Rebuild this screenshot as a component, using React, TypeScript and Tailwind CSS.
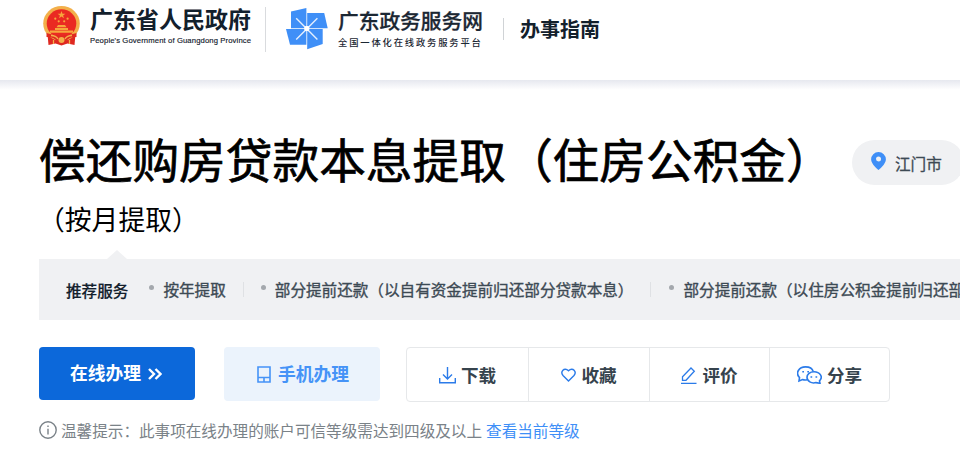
// Service guide page: site header, item title, recommended services and actions
import React from "react";

const services = [
  { label: "按年提取", cls: "ml-[21px]" },
  { label: "部分提前还款（以自有资金提前归还部分贷款本息）", cls: "ml-[17px]" },
  { label: "部分提前还款（以住房公积金提前归还部", cls: "ml-[18px]" },
];

const Emblem: React.FC = () => (
  <svg className="ml-[43px] mt-[6px] h-[40px] w-[37px] shrink-0" viewBox="0 0 37 40">
    <path d="M4.500 28h28l-1 11-7-1.500-6 2-6-2-7 1.500z" fill="#df2820" />
    <ellipse cx="18.500" cy="17.500" rx="18.300" ry="17.500" fill="#f3b04a" />
    <ellipse cx="18.500" cy="17.500" rx="14.800" ry="14.300" fill="#ea2a22" />
    <path d="M18.500 5l1 2.700h2.900l-2.300 1.800.8 2.800-2.400-1.700-2.400 1.700.8-2.800-2.300-1.800h2.900z" fill="#f6a63c" />
    <g fill="#f6a63c">
      <circle cx="12.300" cy="12.700" r="1.100" />
      <circle cx="15.700" cy="15.300" r="1.100" />
      <circle cx="21.200" cy="15.300" r="1.100" />
      <circle cx="24.600" cy="12.700" r="1.100" />
      <path d="M15 19h7l1.500 2.300h-10zM12 22h13v2H12zM7 24.500h23v2.300H7z" />
    </g>
    <path d="M3.500 27q15 5 30 0v4q-8 0-10 4h-10q-2-4-10-4z" fill="#e02a20" />
    <path d="M8 29.500q5 0 7 3.500M29 29.500q-5 0-7 3.500" fill="none" stroke="#f3b04a" strokeWidth="1.300" />
    <circle cx="18.500" cy="34" r="3" fill="#f3b04a" />
    <path d="M10.500 34v4M26.500 34v4" stroke="#f3b04a" strokeWidth="1.300" />
  </svg>
);

const Pinwheel: React.FC = () => (
  <svg className="ml-[20px] mt-[7px] h-[43px] w-[42px] shrink-0" viewBox="0 0 42 43">
    <g fill="#3f8ff7">
      <path d="M5 4.600L20.400 1v20.200H5z" />
      <path d="M21.200 6h17l3.500 15.200H21.200z" />
      <path d="M21.200 22h15.500v15l-15.500 5.300z" />
      <path d="M0 22h20.400v15.700H4z" />
    </g>
    <path d="M10.200 11.200l21.200 21.200M31.400 11.200L10.200 32.400" stroke="#e4effe" strokeWidth="1.400" />
    <rect x="18.300" y="19.100" width="5" height="5" rx="1.500" fill="#fff" />
  </svg>
);

const line = {
  fill: "none",
  stroke: "#2b7be9",
  strokeWidth: 1.4,
} as const;

const DownloadIcon = () => (
  <svg className="h-[17px] w-[17px]" viewBox="0 0 17 17" {...line}>
    <path d="M8.500 0v11.500M4 7.500l4.500 4.500L13 7.500M.7 11v4.800h15.600V11" />
  </svg>
);

const HeartIcon = () => (
  <svg className="h-[14px] w-[15px]" viewBox="0 0 15 14" {...line}>
    <path d="M7.500 13L2 7.500C-1 4 3 -1.500 7.500 2.800 12 -1.500 16 4 13 7.500z" />
  </svg>
);

const PenIcon = () => (
  <svg className="h-[17px] w-[16px]" viewBox="0 0 16 17" {...line}>
    <path d="M1.500 13.300V9.800L10 1l3.300 3.200L5 13.300zM0 16.300h15.500" strokeWidth="1.300" />
  </svg>
);

const ChatIcon = () => (
  <svg className="h-[18px] w-[25px]" viewBox="0 0 25 18" {...line} strokeWidth={1.6}>
    <path d="M10 13.800q-2.500.5-4.500-.3L2 15l.5-3.500C-2 7 2 .9 8.500.9c4 0 7 2 7.700 4.600" />
    <path d="M17 5.700c-4 0-7 2.500-7 5.600 0 4 4.500 6.500 9 5.300l4 .7-.5-2.500C26.500 11 23 5.700 17 5.700z" />
    <path d="M5.300 5.700h1.700M10.300 5.700H12M13.500 11h1.700M18.500 11h1.700" />
  </svg>
);

const actions = [
  { label: "下载", icon: <DownloadIcon />, cls: "w-[121px]" },
  { label: "收藏", icon: <HeartIcon />, cls: "w-[121px] border-l" },
  { label: "评价", icon: <PenIcon />, cls: "w-[120px] border-l" },
  { label: "分享", icon: <ChatIcon />, cls: "w-[120px] border-l" },
];

const App: React.FC = () => {
  return (
    <div className="h-[451px] w-[960px] overflow-hidden bg-white font-['Noto_Sans_CJK_SC',sans-serif] whitespace-nowrap text-[#1b2733]">
      <header className="flex h-[80px] items-start">
        <Emblem />
        <div className="ml-[10px] w-[162px] pt-[3px]">
          <div className="text-[23px] leading-[30px] font-bold text-[#13202c]">广东省人民政府</div>
          <div className="mt-[3px] font-['Liberation_Sans',sans-serif] text-[7.700px] leading-[10px] tracking-[0.110px] text-[#13202c] [-webkit-text-stroke:0.150px_#13202c]">
            People's Government of Guangdong Province
          </div>
        </div>
        <div className="mt-[7px] ml-[13px] h-[45px] w-px bg-[#d9dbde]" />
        <Pinwheel />
        <div className="ml-[10px] w-[146px] pt-[5px]">
          <div className="text-[20.700px] leading-[30px] font-medium [-webkit-text-stroke:0.300px_#1b2733]">广东政务服务网</div>
          <div className="mt-[1px] text-[9.300px] leading-[12px] font-medium tracking-[1.830px]">全国一体化在线政务服务平台</div>
        </div>
        <div className="mt-[18px] ml-[19px] h-[22px] w-px bg-[#d0d3d6]" />
        <div className="mt-[14px] ml-[16px] text-[20px] leading-[30px] font-bold text-[#13202c]">办事指南</div>
      </header>
      <div className="h-[10px] bg-linear-to-b from-[#e6e8ef] to-white" />

      <main className="ml-[39px]">
        <div className="flex h-[104px] items-start pt-[33px]">
          <h1 className="w-[795px] shrink-0 text-[46.700px] leading-[70px] text-black [-webkit-text-stroke:0.700px_black]">
            偿还购房贷款本息提取（住房公积金）
          </h1>
          <div className="mt-[17px] ml-[18px] flex h-[45px] w-[112px] shrink-0 items-center rounded-full bg-[#f0f1f3] pl-[19px]">
            <svg className="mt-[-3px] h-[18px] w-[15px]" viewBox="0 0 15 18">
              <path d="M7.500 0a7.400 7.400 0 0 0-7.400 7.400C.1 12 7.500 18 7.500 18s7.400-6 7.400-10.600A7.400 7.400 0 0 0 7.500 0zm0 4.500a2.500 2.500 0 1 1 0 5 2.500 2.500 0 0 1 0-5z" fill="#3f8ff7" />
            </svg>
            <span className="ml-[9px] text-[15.600px] leading-[24px] text-[#3d4a54] [-webkit-text-stroke:0.300px_#3d4a54]">江门市</span>
          </div>
        </div>
        <div className="ml-[-1px] flex h-[56px] items-start pt-[5px] text-[26.800px] leading-[40px] text-black">（按月提取）</div>

        {/* recommended services */}
        <svg className="ml-[68px] h-[9px] w-[20px]" viewBox="0 0 20 9">
          <path d="M0 9l10-9 10 9z" fill="#f0f1f3" />
        </svg>
        <section className="flex h-[61px] items-center bg-[#f0f1f3] pl-[27px] text-[15.600px] leading-[24px]">
          <span className="shrink-0 font-medium text-[#13202c] [-webkit-text-stroke:0.200px_#13202c]">推荐服务</span>
          {services.map((s, i) => (
            <React.Fragment key={s.label}>
              {i > 0 && <span className="ml-[17px] h-[15px] w-px shrink-0 bg-[#dfe1e4]" />}
              <span className={`mt-[-2px] flex shrink-0 items-center ${s.cls}`}>
                <i className="mt-[-3px] size-[5px] rounded-full bg-[#a4a8ad]" />
                <span className="ml-[9px] text-[#3d4a54] [-webkit-text-stroke:0.350px_#3d4a54]">{s.label}</span>
              </span>
            </React.Fragment>
          ))}
        </section>

        <section className="flex pt-[27px] text-[18px] leading-[27px]">
          <button className="flex h-[53px] w-[156px] items-center rounded-[4px] bg-[#0c68da] pl-[31px] pb-[2px] font-bold text-white">
            <span className="text-[17.800px]">在线办理</span>
            <svg className="mt-[3px] ml-[7px] h-[12px] w-[14px]" viewBox="0 0 14 12" fill="none" stroke="#fff" strokeWidth="2.400">
              <path d="M1 1l5 5-5 5M7.500 1l5 5-5 5" />
            </svg>
          </button>
          <button className="ml-[29px] flex h-[54px] w-[156px] items-center rounded-[4px] bg-[#ebf3fc] pb-[2px] pl-[33px] font-bold text-[#4593f7]">
            <svg className="mt-[2px] h-[17px] w-[14px]" viewBox="0 0 14 17" fill="none" stroke="#4593f7" strokeWidth="1.600">
              <path d="M1 1h12v15H1zM1 11.500h12M7 11.500v4.500" />
            </svg>
            <span className="ml-[7px] text-[17.800px]">手机办理</span>
          </button>
          <div className="ml-[26px] flex h-[55px] rounded-[4px] border border-[#e6e8ea]">
            {actions.map((a) => (
              <button
                key={a.label}
                className={`flex items-center justify-center gap-[5px] border-[#e6e8ea] font-bold text-[#36434d] ${a.cls}`}
              >
                <span className="mt-[1px]">{a.icon}</span>
                <span className="text-[17.600px]">{a.label}</span>
              </button>
            ))}
          </div>
        </section>

        <p className="mt-[16px] flex items-center text-[15.600px] leading-[24px] text-[#7a8288]">
          <svg className="mr-[4px] h-[18px] w-[18px]" viewBox="0 0 18 18" fill="none" stroke="#7a8288" strokeWidth="1.400">
            <circle cx="9" cy="9" r="8.200" />
            <path d="M9 4.500v1.600M9 7.700V13.500" />
          </svg>
          温馨提示：此事项在线办理的账户可信等级需达到四级及以上
          <a className="ml-[4px] text-[#3f8ff7]">查看当前等级</a>
        </p>
      </main>
    </div>
  );
};

export default App;
